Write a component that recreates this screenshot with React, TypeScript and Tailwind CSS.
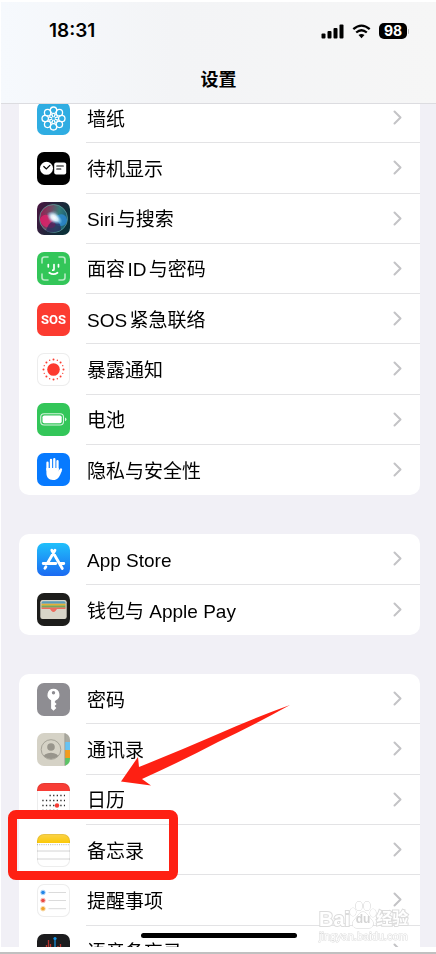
import type { ReactNode } from "react";

function Svg({ children }: { children: ReactNode }) {
  return (
    <svg viewBox="0 0 33 33" className="block size-full" aria-hidden="true">
      {children}
    </svg>
  );
}

const ring = (count: number, radius: number) =>
  Array.from({ length: count }, (_, i) => {
    const angle = (i * 2 * Math.PI) / count;
    return { x: 16.5 + radius * Math.cos(angle), y: 16.5 + radius * Math.sin(angle), i };
  });

const icons: Record<string, ReactNode> = {
  wallpaper: (
    <Svg>
      <rect width="33" height="33" fill="#2fade2" />
      <g fill="none" stroke="#fff" strokeWidth="1.3">
        {ring(8, 8.3).map((p) => (
          <circle key={p.i} cx={p.x} cy={p.y} r="3.2" />
        ))}
        {ring(8, 3.4).map((p) => (
          <circle key={p.i} cx={p.x} cy={p.y} r="1.6" strokeWidth="0.9" />
        ))}
      </g>
    </Svg>
  ),
  standby: (
    <Svg>
      <rect width="33" height="33" fill="#000" />
      <circle cx="9.5" cy="16.3" r="6.5" fill="#fff" />
      <path d="M6.8 14.5l2.5 2.5 3.6-3.6" fill="none" stroke="#000" strokeWidth="1.2" strokeLinecap="round" />
      <rect x="17.2" y="10.4" width="12" height="12" rx="2" fill="#fff" />
      <path d="M19.8 14h6.5M19.8 17h4" stroke="#000" strokeWidth="1.2" strokeLinecap="round" />
    </Svg>
  ),
  siri: (
    <Svg>
      <defs>
        <linearGradient id="siri-bg" x1="0" y1="0" x2="1" y2="0.4">
          <stop offset="0" stopColor="#4a1540" />
          <stop offset="0.5" stopColor="#26243c" />
          <stop offset="1" stopColor="#0b3038" />
        </linearGradient>
        <linearGradient id="siri-orb" x1="0" y1="0.4" x2="1" y2="0.6">
          <stop offset="0" stopColor="#b81d58" />
          <stop offset="0.35" stopColor="#8a5670" />
          <stop offset="0.65" stopColor="#3d9a90" />
          <stop offset="1" stopColor="#17668a" />
        </linearGradient>
        <radialGradient id="siri-glow">
          <stop offset="0" stopColor="#fff" />
          <stop offset="0.4" stopColor="#e6f6ff" stopOpacity="0.9" />
          <stop offset="1" stopColor="#8fd8ff" stopOpacity="0" />
        </radialGradient>
      </defs>
      <rect width="33" height="33" fill="url(#siri-bg)" />
      <circle cx="16.5" cy="16.5" r="14" fill="url(#siri-orb)" fillOpacity="0.75" stroke="#5d9e9a" strokeWidth="0.8" />
      <path d="M3 17c3-6 9-5 13 0 4 4 3 9-2 9-6 0-11-4-11-9z" fill="#e8206c" fillOpacity="0.75" />
      <path d="M30 17c-2-6-8-6-13-1 0 5 3 9 7 8 4 0 6-3 6-7z" fill="#2f8ee0" fillOpacity="0.7" />
      <path d="M9 29c2-7 5-10 9-10s6 4 6 9c-5 3-11 3-15 1z" fill="#27235a" fillOpacity="0.7" />
      <ellipse cx="17.5" cy="16" rx="9" ry="5" fill="url(#siri-glow)" transform="rotate(35 17.5 16)" />
      <ellipse cx="16.500" cy="15" rx="6" ry="7" fill="url(#siri-glow)" fillOpacity="0.5" />
    </Svg>
  ),
  face: (
    <Svg>
      <rect width="33" height="33" fill="#33c659" />
      <path
        d="M5 11V7.5Q5 5 7.500 5H11M22 5h3.500Q28 5 28 7.500V11M28 22v3.500Q28 28 25.500 28H22M11 28H7.500Q5 28 5 25.500V22"
        fill="none"
        stroke="#fff"
        strokeOpacity="0.65"
        strokeWidth="1.6"
        strokeLinecap="round"
      />
      <path
        d="M11.300 12.500v2.300M21.500 12.500v2.300M17 12.500v4.700q0 1-1.200 1M12.300 20.700q4.200 3 8.200 0"
        fill="none"
        stroke="#fff"
        strokeWidth="1.700"
        strokeLinecap="round"
      />
    </Svg>
  ),
  sos: (
    <span className="flex size-full items-center justify-center bg-[#fc3b30] font-['Roboto',sans-serif] text-[13px] leading-none font-bold text-white">
      SOS
    </span>
  ),
  exposure: (
    <Svg>
      <rect width="33" height="33" fill="#fff" />
      <circle cx="16.500" cy="16.500" r="6.300" fill="#fc3b30" />
      {ring(16, 10).map((p) => (
        <circle key={p.i} cx={p.x} cy={p.y} r={p.i % 2 ? 0.7 : 1} fill="#fc3b30" />
      ))}
    </Svg>
  ),
  battery: (
    <Svg>
      <rect width="33" height="33" fill="#33c659" />
      <rect x="3.700" y="10.700" width="22.800" height="11.300" rx="3.400" fill="none" stroke="#fff" strokeOpacity="0.8" strokeWidth="1.100" />
      <rect x="5.500" y="12.500" width="19.200" height="7.700" rx="1.800" fill="#fff" />
      <path d="M28 14.500q1.500.7 1.500 1.900T28 18.300z" fill="#fff" fillOpacity="0.8" />
    </Svg>
  ),
  privacy: (
    <Svg>
      <rect width="33" height="33" fill="#077aff" />
      <g fill="none" stroke="#fff" strokeLinecap="round" strokeLinejoin="round">
        <path d="M10.500 17V9.700M14 16V7M17.300 16V6.200M20.500 17V8.200" strokeWidth="2.300" />
        <path d="M20.500 21.500l3.500-5" strokeWidth="2.300" />
      </g>
      <path d="M9.400 15h12.300v4l1.500-2 1.700.7c-1 2.300-2 5.200-3.500 7-1.300 1.600-3.200 2.300-5.400 2.300-4.500 0-6.600-3-6.600-7z" fill="#fff" />
    </Svg>
  ),
  appstore: (
    <Svg>
      <defs>
        <linearGradient id="store-bg" x1="0" y1="0" x2="0" y2="1">
          <stop offset="0" stopColor="#20c0fb" />
          <stop offset="1" stopColor="#1b6af2" />
        </linearGradient>
      </defs>
      <rect width="33" height="33" fill="url(#store-bg)" />
      <g stroke="#fff" strokeWidth="2.800" strokeLinecap="round" fill="none">
        <path d="M18 7.200L10.300 20.500M14.800 7.200l10.500 18.300M6.200 20.500h12.600M23.500 20.500h3.300M8.900 23.700l-1 1.700" />
      </g>
    </Svg>
  ),
  wallet: (
    <Svg>
      <rect width="33" height="33" fill="#1d1d1b" />
      <rect x="3.300" y="7" width="26.400" height="19" rx="2.200" fill="#d8d5c8" />
      <path d="M4.500 10.800V9.700q0-1.500 1.500-1.500h21q1.500 0 1.500 1.500v1.100z" fill="#5a9bb8" />
      <path d="M4.500 10.700h24v2h-24z" fill="#e5ae35" />
      <path d="M4.500 12.600h24v2.100h-24z" fill="#75a85b" />
      <path d="M4.500 14.600h24V16H20l-1.500 2q-2 2-4 0L13 16H4.500z" fill="#ec6d5f" />
      <path d="M4.500 16.200h8l1.600 2q2.400 2.400 4.800 0l1.600-2h8v7.300q0 1.400-1.400 1.400H6q-1.500 0-1.500-1.400z" fill="#d8d5c8" />
    </Svg>
  ),
  password: (
    <Svg>
      <rect width="33" height="33" fill="#8e8d92" />
      <path
        fillRule="evenodd"
        d="M16.500 5.800a6 6 0 0 0-2.400 11.500v8.300l2.400 2.200 2.900-2.900-1.800-1.900 2-2-2-2 1-1.600A6 6 0 0 0 16.500 5.800zm0 2.300a1.700 1.700 0 1 1 0 3.400 1.700 1.700 0 0 1 0-3.400z"
        fill="#fff"
      />
    </Svg>
  ),
  contacts: (
    <Svg>
      <rect width="33" height="33" fill="#d5d2c6" />
      <path d="M28 0h5v9h-5z" fill="#aaa99f" />
      <path d="M28 9h5v8h-5z" fill="#67c3f3" />
      <path d="M28 17h5v8h-5z" fill="#f29c1f" />
      <path d="M28 25h5v8h-5z" fill="#5bc566" />
      <path d="M27.800 0v33" stroke="#9b998f" strokeWidth="0.800" />
      <defs>
        <clipPath id="contact-disc">
          <circle cx="14" cy="16.500" r="9.500" />
        </clipPath>
      </defs>
      <g clipPath="url(#contact-disc)" fill="#98958c">
        <circle cx="14" cy="14" r="3.800" />
        <ellipse cx="14" cy="25" rx="8" ry="5.300" />
      </g>
      <circle cx="14" cy="16.500" r="9.800" fill="none" stroke="#98958c" strokeWidth="0.800" />
    </Svg>
  ),
  calendar: (
    <Svg>
      <rect width="33" height="33" fill="#fff" />
      <path d="M0 0h33v8H0z" fill="#f83d35" />
      <g stroke="#2d2d2d" strokeWidth="1.300" strokeDasharray="1.300 2.300">
        <path d="M12.500 12.500h15.500M5.300 17.500H28M5.300 22.500H28M5.300 27.500h15.500" />
      </g>
      <circle cx="20" cy="22.500" r="2.200" fill="#f83d35" />
    </Svg>
  ),
  notes: (
    <Svg>
      <defs>
        <linearGradient id="notes-top" x1="0" y1="0" x2="0" y2="1">
          <stop offset="0" stopColor="#fbd34b" />
          <stop offset="1" stopColor="#fbc908" />
        </linearGradient>
      </defs>
      <rect width="33" height="33" fill="#fff" />
      <path d="M0 0h33v9H0z" fill="url(#notes-top)" />
      <path d="M0 10.700h33" stroke="#aaa" strokeWidth="0.900" strokeDasharray="1 1.200" />
      <path d="M0 17h33M0 25h33" stroke="#c9c9c9" strokeWidth="0.800" />
    </Svg>
  ),
  reminders: (
    <Svg>
      <rect width="33" height="33" fill="#fff" />
      <path d="M11.500 8.500H29M11.500 16.500H29M11.500 24.700H29" stroke="#d7d7d7" strokeWidth="0.900" />
      <circle cx="6" cy="8.500" r="2.300" fill="#2386e8" stroke="#b8d9f8" />
      <circle cx="6" cy="16.500" r="2.300" fill="#e94b43" stroke="#f8c3c0" />
      <circle cx="6" cy="24.700" r="2.300" fill="#f0a42b" stroke="#f9dfb5" />
    </Svg>
  ),
  voice: (
    <Svg>
      <rect width="33" height="33" fill="#1c1c1e" />
      <path d="M9.500 11v8M11.500 6v18M13.500 10v10M21 12v9M23.500 10v12M26 15v4" stroke="#b8352f" strokeWidth="1.300" />
      <path d="M18 5v24" stroke="#1797e8" strokeWidth="1.200" />
      <circle cx="18" cy="4.500" r="1.600" fill="#1797e8" />
    </Svg>
  ),
};

type Item = { icon: string; label: string; outlined?: boolean; marked?: boolean };

function Row({ icon, label, outlined, marked, last }: Item & { last: boolean }) {
  return (
    <li className="relative flex flex-1">
      <a href="#" className="flex flex-1 items-center gap-4 pl-[18px]">
        <span
          className={`size-[33px] shrink-0 overflow-hidden rounded-[7px] ${outlined ? "ring-1 ring-[#ededed] ring-inset" : ""}`}
        >
          <span className={`block size-full ${outlined ? "mix-blend-multiply" : ""}`}>{icons[icon]}</span>
        </span>
        <span
          className={`flex flex-1 items-center justify-between self-stretch pr-[18px] pl-px ${last ? "" : "border-b border-[#e3e3e5]"}`}
        >
          <span className="pt-1 text-[19px] leading-6 whitespace-nowrap text-black [text-autospace:normal]">{label}</span>
          <svg viewBox="0 0 9 15" className="h-[15px] w-[9px]" aria-hidden="true">
            <path d="M1.500 1.500l6 6-6 6" fill="none" stroke="#c3c3c6" strokeWidth="2" strokeLinecap="round" strokeLinejoin="round" />
          </svg>
        </span>
      </a>
      {marked && (
        <span className="pointer-events-none absolute -top-[15px] -left-[11px] z-20 h-[70px] w-[170px] rounded-lg border-[9px] border-[#fe2013]" />
      )}
    </li>
  );
}

function Group({ items, className }: { items: Item[]; className: string }) {
  return (
    <ul className={`flex shrink-0 flex-col rounded-[10px] bg-white ${className}`}>
      {items.map((item, i) => (
        <Row key={item.label} {...item} last={i === items.length - 1} />
      ))}
    </ul>
  );
}

const system: Item[] = [
  { icon: "wallpaper", label: "墙纸" },
  { icon: "standby", label: "待机显示" },
  { icon: "siri", label: "Siri与搜索" },
  { icon: "face", label: "面容ID与密码" },
  { icon: "sos", label: "SOS紧急联络" },
  { icon: "exposure", label: "暴露通知", outlined: true },
  { icon: "battery", label: "电池" },
  { icon: "privacy", label: "隐私与安全性" },
];

const store: Item[] = [
  { icon: "appstore", label: "App Store" },
  { icon: "wallet", label: "钱包与 Apple Pay" },
];

const apps: Item[] = [
  { icon: "password", label: "密码" },
  { icon: "contacts", label: "通讯录" },
  { icon: "calendar", label: "日历", outlined: true },
  { icon: "notes", label: "备忘录", outlined: true, marked: true },
  { icon: "reminders", label: "提醒事项", outlined: true },
  { icon: "voice", label: "语音备忘录" },
];

function StatusBar() {
  return (
    <div className="flex items-center justify-between pt-[17px] pr-[27px] pl-12 font-['Inter',sans-serif]">
      <span className="text-[19px] leading-6 font-semibold">18:31</span>
      <div className="flex items-center gap-2">
        <svg viewBox="0 0 23 15" className="h-[15px] w-[23px]" aria-hidden="true">
          <rect x="0.500" y="9.500" width="4" height="5" rx="1" />
          <rect x="6.500" y="7" width="4" height="7.500" rx="1" />
          <rect x="12.500" y="4" width="4" height="10.500" rx="1" />
          <rect x="18.500" y="0.500" width="4" height="14" rx="1" />
        </svg>
        <svg viewBox="0 0 19 15" className="h-[15px] w-[19px]" aria-hidden="true">
          <path d="M1.300 5.200q8.200-7.200 16.400 0M4.200 8.500q5.300-4.600 10.600 0" fill="none" stroke="#000" strokeWidth="2.300" />
          <path d="M9.500 14.300l-3-3.200q3-2.300 6 0z" />
        </svg>
        <div className="flex items-center gap-px">
          <span className="flex h-4 w-7 items-center justify-center rounded-[5px] bg-black text-[14px] leading-none font-bold text-white">
            98
          </span>
          <span className="h-[5px] w-px rounded-r bg-[#b5b5b5]" />
        </div>
      </div>
    </div>
  );
}

function Watermark() {
  return (
    <div
      aria-label="Baidu 经验"
      className="absolute right-[27px] bottom-1 z-10 w-[90px] text-white [-webkit-text-stroke:2px_#dcdcdc] [paint-order:stroke]"
    >
      <div className="flex items-center text-[20px] leading-5 font-bold">
        <span>Bai</span>
        <span className="relative flex w-[26px] justify-center text-[12px]">
          <svg viewBox="0 0 28 30" className="absolute -top-[9px] -left-px h-[30px] w-7" aria-hidden="true">
            <g fill="#fff" stroke="#d4d4d4" strokeWidth="1">
              <ellipse cx="4" cy="12" rx="3" ry="4" />
              <ellipse cx="10" cy="6" rx="3.200" ry="4.500" />
              <ellipse cx="18" cy="6" rx="3.200" ry="4.500" />
              <ellipse cx="24" cy="13" rx="3" ry="4" />
              <path d="M14 12c4 0 5 4 8 7 4 4 2 9-2 9H8c-5 0-6-5-2-9 3-3 4-7 8-7z" />
            </g>
          </svg>
          <span className="relative text-[#d4d4d4] [-webkit-text-stroke:0]">du</span>
        </span>
        <span className="text-[16px] whitespace-nowrap">经验</span>
      </div>
      <div className="text-[11px] leading-[14px] whitespace-nowrap [-webkit-text-stroke:1px_#dcdcdc]">jingyan.baidu.com</div>
    </div>
  );
}

export default function App() {
  return (
    <div className="flex h-screen flex-col bg-white pt-[2px] font-['Liberation_Sans','Noto_Sans_CJK_SC',sans-serif] text-black">
      <div className="relative ml-px flex min-h-0 flex-1 flex-col overflow-hidden bg-[#f1f0f6]">
        <header className="relative z-10 h-[102px] shrink-0 border-b border-[#dcdce0] bg-[#f6f6f6] bg-linear-to-r from-[#f6f9fd] via-[#f3f4f6] via-40% to-[#f6f6f6]">
          <StatusBar />
          <h1 className="pt-[25px] text-center text-[18px] leading-6 font-semibold">设置</h1>
        </header>
        <main className="-mt-[11px] flex min-h-0 flex-1 flex-col gap-[39px] pr-4 pl-[18px]">
          <Group items={system} className="min-h-[402px]" />
          <Group items={store} className="min-h-[101px]" />
          <Group items={apps} className="min-h-[302px]" />
        </main>
        <svg viewBox="0 0 172 82" className="pointer-events-none absolute top-[702px] left-[118px] z-20 h-[82px] w-[172px]" aria-hidden="true">
          <path d="M171 1Q135 14 99 30Q60 47 20 63L19 53 2 77.500l30 4-9-6.500Q65 56 99 38Q135 21 171 1z" fill="#fe2013" />
        </svg>
        <Watermark />
        <div className="absolute bottom-[9px] left-1/2 z-20 h-[5px] w-[156px] -translate-x-1/2 rounded-full bg-black" />
      </div>
      <div className="mt-[5px] h-[2px] shrink-0 bg-[#c0c0c0]" />
    </div>
  );
}
